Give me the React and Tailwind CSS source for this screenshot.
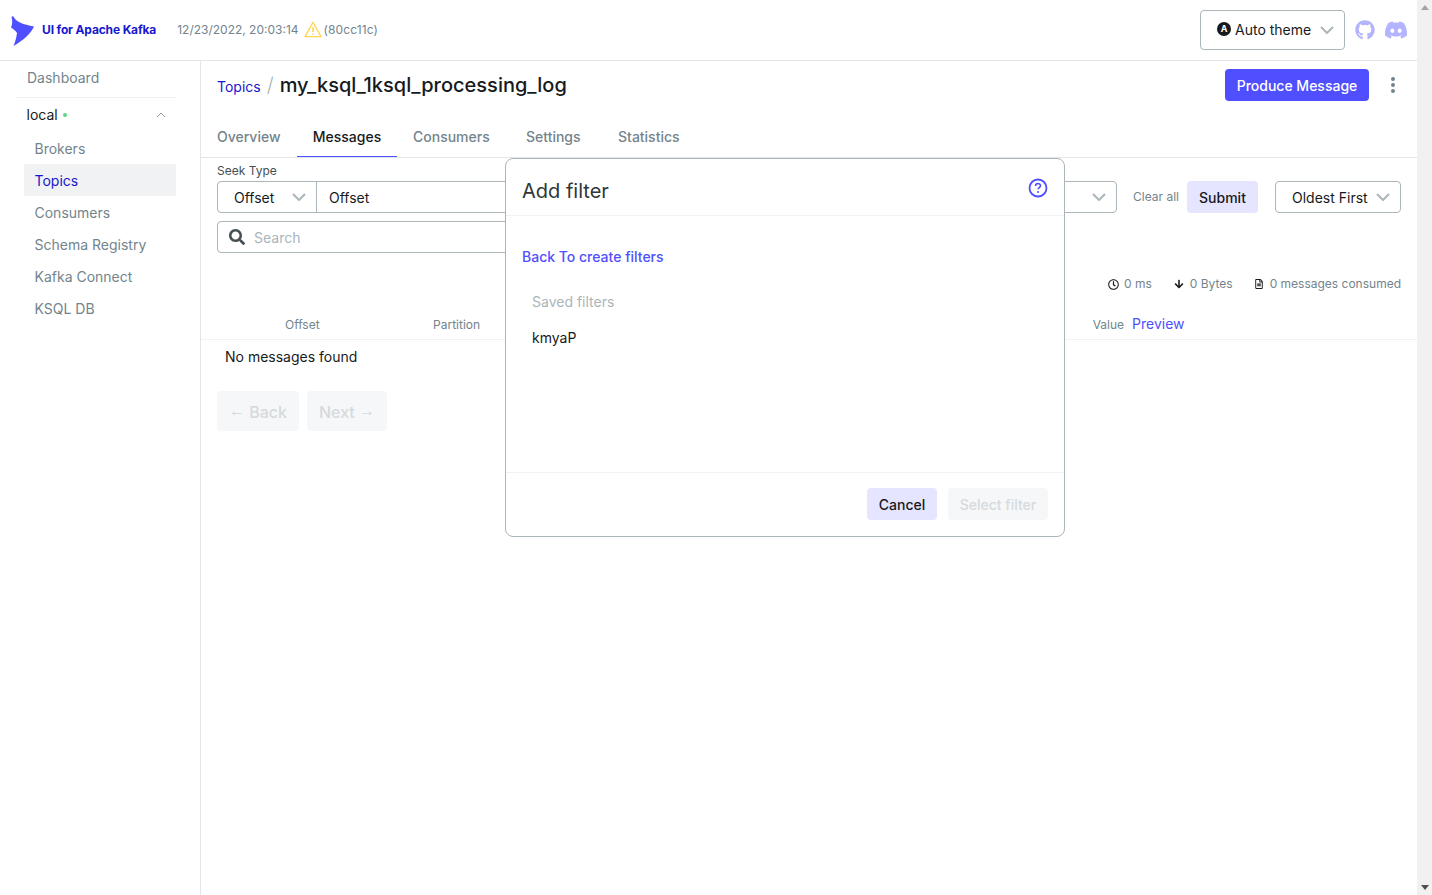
import React from "react";
import { FaGithub, FaDiscord, FaSearch, FaRegClock, FaArrowDown, FaRegFileAlt } from "react-icons/fa";

const Chevron = ({ className = "" }) => (
  <svg width="14" height="8" viewBox="0 0 14 8" fill="none" className={className}>
    <path d="M1 1l6 6 6-6" stroke="#ABB5BA" strokeWidth="2" />
  </svg>
);

const navItems = ["Brokers", "Topics", "Consumers", "Schema Registry", "Kafka Connect", "KSQL DB"];

function Header() {
  return (
    <header className="h-[61px] shrink-0 border-b border-[#E3E6E8] flex items-center justify-between pl-[11px] pr-[9px]">
      <div className="flex items-center">
        <svg width="23" height="30" viewBox="0 0 23 30" className="mt-[1px]">
          <path d="M0.5 1 L2 0 C5 6 12 8.5 23 10.5 C20 17 13 24 2.5 30 C4.5 25 5.5 21 6 17 C4 14 2 13 0 11.5 C1.5 8 1.5 5 0.5 1 Z" fill="#4F4FFF" />
        </svg>
        <span className="ml-[8px] text-[12px] font-bold text-[#1717CF] tracking-[-0.15px]">UI for Apache Kafka</span>
        <span className="ml-[21px] text-[12px] text-[#73848C]">12/23/2022, 20:03:14</span>
        <svg width="18" height="17" viewBox="0 0 18 17" fill="none" className="ml-[5px] -mt-[1px]">
          <path d="M9 1.2L17 15.6H1L9 1.2Z" stroke="#FFD54F" strokeWidth="1.3" strokeLinejoin="round" />
          <path d="M9 6v5M9 12.4v1.4" stroke="#FFC933" strokeWidth="1.3" />
        </svg>
        <span className="ml-[2px] text-[12px] tracking-[0.1px] text-[#73848C]">(80cc11c)</span>
      </div>
      <div className="flex items-center">
        <div className="h-10 w-[145px] rounded border border-[#ABB5BA] flex items-center pl-4">
          <span className="w-[14px] h-[14px] -mt-[3px] rounded-full bg-[#171A1C] text-white text-[9px] font-bold flex items-center justify-center">A</span>
          <span className="ml-[4px] -mt-[2px] text-[14px] text-[#171A1C]">Auto theme</span>
          <Chevron className="ml-[9px]" />
        </div>
        <FaGithub size={20} className="ml-[10px] text-[#B3B3FF]" />
        <FaDiscord size={24} className="ml-[9px] text-[#B3B3FF]" />
      </div>
    </header>
  );
}

function Sidebar() {
  return (
    <aside className="w-[201px] shrink-0 border-r border-[#E3E6E8] pl-4 pr-6">
      <div className="h-8 flex items-center pl-[11px] text-[14px] text-[#73848C]">Dashboard</div>
      <div className="mt-[4px] h-[33px] border-t border-[#F1F2F3] flex items-center pl-[10.5px] text-[14px] text-[#171A1C] pt-px">
        local
        <span className="ml-[5px] w-[4px] h-[4px] rounded-full bg-[#5CD685]" />
        <svg width="10" height="6" viewBox="0 0 10 6" fill="none" className="ml-auto mr-[10px]">
          <path d="M1 5l4-4 4 4" stroke="#73848C" strokeWidth="0.8" />
        </svg>
      </div>
      <div className="mt-[2px] pl-2">
        {navItems.map((n) => (
          <div key={n} className={`h-8 flex items-center pl-[10.5px] text-[14px] ${n === "Topics" ? "bg-[#F1F2F3] text-[#1717CF]" : "text-[#73848C]"}`}>
            {n}
          </div>
        ))}
      </div>
    </aside>
  );
}

function Tabs() {
  return (
    <nav className="h-[48px] border-b border-[#E3E6E8] flex text-[14px] font-medium text-[#73848C]">
      <div className="w-[96px] pl-4 pt-[16px]">Overview</div>
      <div className="w-[100px] h-[47px] pt-[16px] text-center text-[#171A1C] border-b border-[#4F4FFF]">Messages</div>
      <div className="w-[109px] pl-4 pt-[16px]">Consumers</div>
      <div className="ml-[4px] w-[87px] pl-4 pt-[16px]">Settings</div>
      <div className="ml-[5px] pl-4 pt-[16px]">Statistics</div>
    </nav>
  );
}

function Filters() {
  return (
    <section className="pl-4 pr-4">
      <label className="block h-[23px] pt-[5px] text-[12px] leading-[15px] text-[#454F54]">Seek Type</label>
      <div className="flex items-center">
        <div className="flex-1 h-8 flex rounded border border-[#ABB5BA] text-[14px] text-[#171A1C]">
          <div className="w-[99px] shrink-0 border-r border-[#ABB5BA] flex items-center pl-4">
            Offset
            <Chevron className="ml-[18px]" />
          </div>
          <div className="flex-1 flex items-center pl-3">Offset</div>
          <div className="flex items-center pr-[10px]"><Chevron /></div>
        </div>
        <span className="ml-4 text-[12px] text-[#73848C] -mt-px">Clear all</span>
        <button className="ml-2 h-8 w-[71px] rounded bg-[#E5E5FF] text-[14px] font-medium text-[#171A1C]">Submit</button>
        <div className="ml-[17px] h-8 w-[126px] rounded border border-[#ABB5BA] flex items-center pl-4 text-[14px] text-[#171A1C]">
          Oldest First
          <Chevron className="ml-[8px]" />
        </div>
      </div>
      <div className="mt-2 w-[400px] h-8 rounded border border-[#ABB5BA] flex items-center pl-[11px] text-[14px] text-[#ABB5BA]">
        <FaSearch size={16} className="text-[#454F54]" />
        <span className="ml-[9px]">Search</span>
      </div>
      <div className="mt-[23px] h-[16px] flex items-center justify-end text-[12px] text-[#73848C]">
        <FaRegClock size={11} className="text-[#171A1C]" />
        <span className="ml-[5px]">0 ms</span>
        <FaArrowDown size={10} className="ml-[22px] text-[#171A1C]" />
        <span className="ml-[6px]">0 Bytes</span>
        <FaRegFileAlt size={10} className="ml-[21px] text-[#171A1C]" />
        <span className="ml-[6px]">0 messages consumed</span>
      </div>
    </section>
  );
}

function Table() {
  return (
    <section>
      <div className="mt-[24px] h-[24px] border-b border-[#F1F2F3] flex items-start text-[12px] text-[#73848C]">
        <span className="ml-[84px]">Offset</span>
        <span className="ml-[113.5px]">Partition</span>
        <span className="ml-[612.5px]">Value</span>
        <span className="ml-[8px] -mt-[3px] text-[14px] text-[#4F4FFF]">Preview</span>
      </div>
      <div className="pl-6 h-[33px] flex items-center text-[14px] text-[#171A1C]">No messages found</div>
      <div className="mt-[18px] pl-4 flex gap-2 text-[16px] font-medium text-[#D5DADD]">
        <button className="h-10 w-[82px] rounded bg-[#F6F7F8]"><span className="font-['Liberation_Sans'] font-normal align-[2px]">←</span> Back</button>
        <button className="h-10 w-[80px] rounded bg-[#F6F7F8]">Next <span className="font-['Liberation_Sans'] font-normal align-[2px]">→</span></button>
      </div>
    </section>
  );
}

function Modal() {
  return (
    <div className="absolute left-[505px] top-[158px] w-[560px] h-[379px] bg-white rounded-lg border border-[#ABB5BA] flex flex-col">
      <div className="h-[57px] shrink-0 border-b border-[#F1F2F3] flex items-center justify-between pl-4 pr-4">
        <h2 className="text-[20px] font-normal text-[#2F3639] mt-[7px]">Add filter</h2>
        <svg width="20" height="20" viewBox="0 0 20 20" fill="none" className="mt-[1px] mr-0">
          <circle cx="10" cy="10" r="8.5" stroke="#4F4FFF" strokeWidth="1.8" />
          <path d="M7.6 8c0-3.2 4.9-3.2 4.9-.2 0 1.7-2.4 1.8-2.4 3.4" stroke="#4F4FFF" strokeWidth="1.6" fill="none" />
          <circle cx="10" cy="14" r="1" fill="#4F4FFF" />
        </svg>
      </div>
      <div className="flex-1 pl-4">
        <div className="mt-[32px] text-[14px] leading-[17px] font-medium text-[#4F4FFF]">Back To create filters</div>
        <div className="mt-[28px] pl-[10px] text-[14px] leading-[17px] text-[#ABB5BA]">Saved filters</div>
        <div className="mt-[19px] pl-[10px] text-[14px] leading-[17px] text-[#171A1C]">kmyaP</div>
      </div>
      <div className="h-[64px] shrink-0 border-t border-[#F1F2F3] flex items-start pt-[15px] justify-end gap-[11px] pr-4">
        <button className="h-8 w-[70px] rounded bg-[#E5E5FF] text-[14px] font-medium text-[#171A1C]">Cancel</button>
        <button className="h-8 w-[100px] rounded bg-[#F6F7F8] text-[14px] font-medium text-[#D5DADD]">Select filter</button>
      </div>
    </div>
  );
}

function Scrollbar() {
  return (
    <div className="w-[15px] shrink-0 bg-[#F1F1F1] flex flex-col justify-between items-center py-[5px]">
      <span className="w-0 h-0 border-x-[4px] border-x-transparent border-b-[5px] border-b-[#A3A3A3]" />
      <span className="w-0 h-0 border-x-[4px] border-x-transparent border-t-[5px] border-t-[#505050]" />
    </div>
  );
}

export default function App() {
  return (
    <div className="relative h-[895px] w-full flex overflow-hidden bg-white font-['Inter',sans-serif]">
      <div className="flex-1 min-w-0 flex flex-col">
        <Header />
        <div className="flex flex-1">
          <Sidebar />
          <main className="flex-1 min-w-0">
            <div className="h-[49px] pl-4 pr-4 flex items-start">
              <div className="flex items-baseline mt-[9px]">
                <span className="text-[14px] text-[#1717CF]">Topics</span>
                <span className="ml-[6px] text-[20px] font-light text-[#ABB5BA]">/</span>
                <span className="ml-[6px] text-[20px] font-medium text-[#171A1C]">my_ksql_1ksql_processing_log</span>
              </div>
              <button className="ml-auto mt-[8px] h-8 w-[144px] rounded bg-[#4F4FFF] text-[14px] font-medium text-white">Produce Message</button>
              <svg width="4" height="16" viewBox="0 0 4 16" className="ml-[22px] mt-[16px] mr-[6px]" fill="#73848C">
                <circle cx="2" cy="2" r="2" /><circle cx="2" cy="8" r="2" /><circle cx="2" cy="14" r="2" />
              </svg>
            </div>
            <Tabs />
            <Filters />
            <Table />
          </main>
        </div>
      </div>
      <Scrollbar />
      <Modal />
    </div>
  );
}
